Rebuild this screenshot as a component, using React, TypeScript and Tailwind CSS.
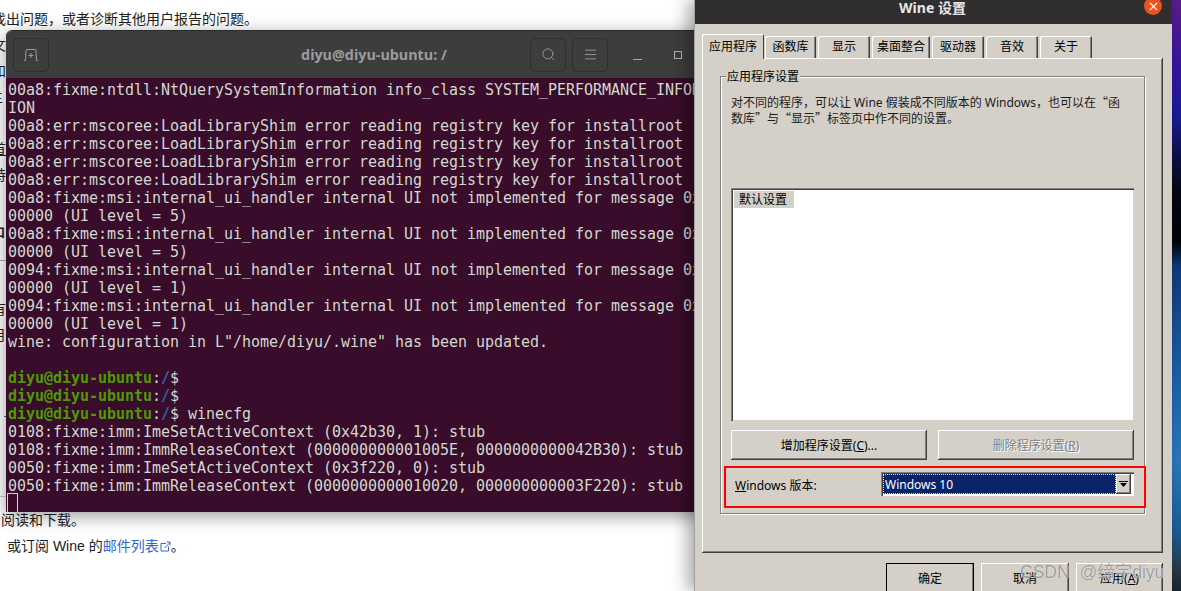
import { Search, Menu, X } from "lucide-react";

const raised =
  "bg-[#d4d0c8] shadow-[inset_-1px_-1px_0_#404040,inset_1px_1px_0_#ffffff,inset_-2px_-2px_0_#808080]";
const cjk = "font-['Noto_Sans','Noto_Sans_CJK_SC',sans-serif]";

const tabs = [
  { label: "函数库", w: "w-[51px]" },
  { label: "显示", w: "w-[52px]" },
  { label: "桌面整合", w: "w-[58px]" },
  { label: "驱动器", w: "w-[52px]" },
  { label: "音效", w: "w-[52px]" },
  { label: "关于", w: "w-[52px]" },
];

const msi = (id: string, level: number) => [
  `${id}:fixme:msi:internal_ui_handler internal UI not implemented for message 0x0b0`,
  `00000 (UI level = ${level})`,
];

const err = "00a8:err:mscoree:LoadLibraryShim error reading registry key for installroot";

const logLines = [
  "00a8:fixme:ntdll:NtQuerySystemInformation info_class SYSTEM_PERFORMANCE_INFORMAT",
  "ION",
  err,
  err,
  err,
  err,
  ...msi("00a8", 5),
  ...msi("00a8", 5),
  ...msi("0094", 1),
  ...msi("0094", 1),
  'wine: configuration in L"/home/diyu/.wine" has been updated.',
  "",
];

const afterLines = [
  "0108:fixme:imm:ImeSetActiveContext (0x42b30, 1): stub",
  "0108:fixme:imm:ImmReleaseContext (000000000001005E, 0000000000042B30): stub",
  "0050:fixme:imm:ImeSetActiveContext (0x3f220, 0): stub",
  "0050:fixme:imm:ImmReleaseContext (0000000000010020, 000000000003F220): stub",
];

function Prompt({ cmd }: { cmd?: string }) {
  return (
    <div className="h-[18px]">
      <span className="font-bold text-[#4e9a06]">diyu@diyu-ubuntu</span>
      <span>:</span>
      <span className="font-bold text-[#3465a4]">/</span>
      <span>$ {cmd}</span>
    </div>
  );
}

function Terminal() {
  return (
    <div className="absolute left-[6px] top-[30px] flex h-[482px] w-[736px] flex-col overflow-hidden rounded-t-[6px] border-t border-[#2c2c2c] shadow-[0_4px_18px_rgba(0,0,0,0.4)]">
      <div className="grid h-[47px] shrink-0 grid-cols-[1fr_auto_1fr] items-center bg-[#3d3d3d] px-[7px]">
        <div className="flex">
          <div className="flex h-[34px] w-[36px] items-center justify-center rounded-[5px] border border-[#2e2e2e]">
            <svg width="16" height="14" viewBox="0 0 16 14" fill="none" stroke="#9a9a9a" strokeWidth="1">
              <path d="M1 12.5h1.5L3 2.5q0-1 1-1h8q1 0 1 1l.5 10H15" />
              <path d="M8 5v5M5.5 7.5h5" />
            </svg>
          </div>
        </div>
        <div className="text-[14.3px] font-bold text-[#9c9c9c] font-['Open_Sans',sans-serif]">diyu@diyu-ubuntu: /</div>
        <div className="flex items-center justify-end pr-[53px]">
          <div className="flex h-[34px] w-[36px] items-center justify-center rounded-[5px] border border-[#2e2e2e]">
            <Search size={15} color="#a8a8a8" strokeWidth={1.3} />
          </div>
          <div className="ml-[6px] flex h-[34px] w-[36px] items-center justify-center rounded-[5px] border border-[#2e2e2e]">
            <Menu size={15} color="#a8a8a8" strokeWidth={1.3} />
          </div>
          <div className="ml-[25px] mt-[10px] h-px w-[9px] bg-[#a8a8a8]" />
          <div className="ml-[32px] h-[8px] w-[8px] border border-[#b0b0b0]" />
        </div>
      </div>
      <div className="flex-1 whitespace-pre bg-[#380c2a] pl-[2px] pt-[3px] text-[15px] leading-[18px] tracking-[-0.03px] text-[#d3d7cf] font-['DejaVu_Sans_Mono',monospace]">
        {logLines.map((line, i) => (
          <div key={i} className="h-[18px]">
            {line}
          </div>
        ))}
        <Prompt />
        <Prompt />
        <Prompt cmd="winecfg" />
        {afterLines.map((line, i) => (
          <div key={i} className="h-[18px]">
            {line}
          </div>
        ))}
        <div className="-ml-px -mt-[2px] h-[20px] w-[11px] border border-[#d3d7cf]" />
      </div>
    </div>
  );
}

function PageBehind() {
  return (
    <div className="flex h-[591px] flex-col overflow-hidden bg-white text-[14px] leading-[26px] text-[#202122] font-['Liberation_Sans','Noto_Sans_CJK_SC',sans-serif]">
      <div className="-ml-2 mt-[6px] whitespace-nowrap">找出问题，或者诊断其他用户报告的问题。</div>
      <div className="-ml-2">文</div>
      <div className="-ml-2">和</div>
      <div className="-ml-[11px]">主</div>
      <div className="-ml-2 h-[26px]" />
      <div className="-ml-2 underline">首</div>
      <div className="-ml-2">特</div>
      <div className="-ml-4 mt-[34px] text-[22px]">中</div>
      <div className="mt-[12px] h-px w-full bg-[#a2a9b1]" />
      <div className="-ml-2 mt-[35px]">有</div>
      <div className="-ml-2">月</div>
      <div className="ml-[4px] mt-[68px] h-px w-[2px] bg-[#3366cc]" />
      <div className="mt-[79px] h-px w-full bg-[#c8ccd1]" />
      <div className="ml-px mt-[10px]">阅读和下载。</div>
      <div className="ml-[7px] flex items-center whitespace-nowrap">
        <span>或订阅 Wine 的</span>
        <span className="text-[#3366cc]">邮件列表</span>
        <svg width="11" height="11" viewBox="0 0 11 11" fill="none" stroke="#3366cc" strokeWidth="1" className="ml-px">
          <path d="M6 2.5H1v7.5h7.5V5.5" />
          <path d="M4.5 7 10 1.5M6.5 1H10v3.5" />
        </svg>
        <span>。</span>
      </div>
    </div>
  );
}

function WineButton({ className, children }: { className: string; children: React.ReactNode }) {
  return <div className={`flex h-[30px] items-center justify-center pt-px ${raised} ${className}`}>{children}</div>;
}

function WineWindow() {
  return (
    <div className={`absolute left-[694px] top-0 flex h-[591px] w-[478px] flex-col overflow-hidden border-l border-[#a0a0a0] bg-[#d4d0c8] text-[12px] leading-[16px] text-black shadow-[-6px_0_16px_rgba(0,0,0,0.35)] ${cjk}`}>
      <div className="relative flex h-[24px] shrink-0 justify-center bg-[#302e2e] pr-[2px] text-[14px] font-bold leading-[16px] text-[#e8e8e8]">
        Wine 设置
        <div className="absolute right-[10px] top-[-3px] flex h-[18px] w-[18px] items-center justify-center rounded-full bg-[#e95420]">
          <X size={13} color="#ffffff" strokeWidth={2} />
        </div>
      </div>

      <div className="flex h-[34px] shrink-0 items-end pl-[7px]">
        <div className="relative z-10 flex h-[25px] w-[62px] -mb-px items-center justify-center rounded-t-[2px] bg-[#d4d0c8] shadow-[inset_1px_1px_0_#ffffff,inset_-1px_0_0_#404040]">
          应用程序
        </div>
        <div className="ml-px flex gap-[2px]">
          {tabs.map((t) => (
            <div
              key={t.label}
              className={`flex h-[22px] items-center justify-center rounded-t-[2px] shadow-[inset_1px_1px_0_#ffffff,inset_-1px_0_0_#404040,inset_-2px_0_0_#808080] ${t.w}`}
            >
              {t.label}
            </div>
          ))}
        </div>
      </div>

      <div className="ml-[7px] h-[495px] w-[461px] shrink-0 p-[18px] shadow-[inset_-1px_-1px_0_#404040,inset_1px_1px_0_#ffffff,inset_-2px_-2px_0_#808080]">
        <div className="relative flex h-[438px] flex-col border border-[#808080] px-[10px] pt-[17px] shadow-[1px_1px_0_#ffffff,inset_1px_1px_0_#ffffff]">
          <div className="absolute left-[5px] top-[-8px] bg-[#d4d0c8] px-px">应用程序设置</div>
          <div className="h-[94px] whitespace-nowrap text-[#1a1a1a]">
            <div className="h-[16px]">
              对不同的程序，可以让 Wine 假装成不同版本的 Windows，也可以在
              <span className="font-['Noto_Sans_CJK_SC',sans-serif]">“</span>函
            </div>
            <div className="h-[16px]">
              数库<span className="font-['Noto_Sans_CJK_SC',sans-serif]">”</span>与
              <span className="font-['Noto_Sans_CJK_SC',sans-serif]">“</span>显示
              <span className="font-['Noto_Sans_CJK_SC',sans-serif]">”</span>标签页中作不同的设置。
            </div>
          </div>
          <div className="h-[233px] w-[403px] shrink-0 bg-white p-[3px] shadow-[inset_1px_1px_0_#808080,inset_2px_2px_0_#404040,inset_-1px_-1px_0_#d4d0c8]">
            <div className="flex h-[17px] w-[60px] items-center bg-[#d4d0c8] pl-[5px]">默认设置</div>
          </div>
          <div className="mt-[9px] flex justify-between">
            <WineButton className="w-[196px]">
              <span>
                增加程序设置(<span className="underline">C</span>)...
              </span>
            </WineButton>
            <WineButton className="w-[196px] text-[#808080] [text-shadow:1px_1px_0_#ffffff]">
              <span>
                删除程序设置(<span className="underline">R</span>)
              </span>
            </WineButton>
          </div>
          <div className="mt-[12px] flex h-[24px] items-center pl-[4px]">
            <div className="w-[146px] pt-[3px]">
              <span className="underline">W</span>indows 版本:
            </div>
            <div className="flex h-[24px] w-[253px] items-center bg-white p-[2px] shadow-[inset_1px_1px_0_#808080,inset_2px_2px_0_#404040]">
              <div className="flex h-[20px] w-[233px] items-center border border-dotted border-[#e0e0c8] bg-[#0a246a] pl-px pt-px text-white">
                Windows 10
              </div>
              <div className={`flex h-[20px] w-[15px] items-center justify-center ${raised}`}>
                <svg width="9" height="6" viewBox="0 0 9 6" fill="#000000">
                  <path d="M0 0h9v1H0zM1 2h7L4.5 6z" />
                </svg>
              </div>
            </div>
          </div>
        </div>
      </div>

      <div className="mt-[10px] flex shrink-0 justify-end gap-[7px] pr-[9px]">
        <WineButton className="w-[88px] outline outline-1 -outline-offset-1 outline-black">确定</WineButton>
        <WineButton className="w-[88px]">取消</WineButton>
        <WineButton className="w-[87px]">
          <span>
            应用(<span className="underline">A</span>)
          </span>
        </WineButton>
      </div>

      {/* annotation drawn over the dialog */}
      <div className="pointer-events-none absolute left-[29px] top-[466px] h-[42px] w-[422px] border-2 border-[#ff0000]" />
    </div>
  );
}

function Wallpaper() {
  return (
    <div className="absolute right-0 top-0 h-[591px] w-[9px] bg-[linear-gradient(180deg,#5b1d8c_0%,#3a14a0_10%,#1a1a9a_20%,#0c1040_27%,#05060f_33%,#020308_41%,#0f3a78_45%,#1c5ca8_62%,#2a78c0_78%,#1a5c96_90%,#2a3a4a_96%,#1a2430_100%)]" />
  );
}

export default function App() {
  return (
    <div className="relative h-[591px] w-[1181px] overflow-hidden">
      <PageBehind />
      <Terminal />
      <Wallpaper />
      <WineWindow />
      {/* CSDN watermark */}
      <div className="pointer-events-none absolute left-[1020px] top-[559px] whitespace-nowrap text-[17.5px] leading-[26px] [word-spacing:5px] text-[#858585]/80 [text-shadow:0_0_1px_#ffffff] font-['Liberation_Sans','Noto_Sans_CJK_SC',sans-serif]">
        CSDN @缔宇diyu
      </div>
    </div>
  );
}
